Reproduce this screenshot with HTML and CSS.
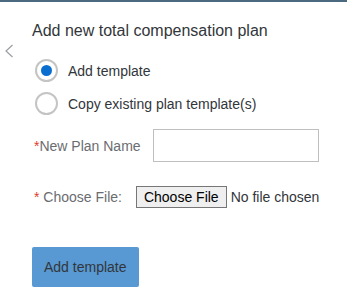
FILE: index.html
```html
<!DOCTYPE html>
<html lang="en">
<head>
    <meta charset="UTF-8">
    <title>Add new total compensation plan</title>
    <link rel="stylesheet" href="styles.css">
</head>
<body>

<div class="page">
    <div class="back">
        <svg class="back-icon" width="10" height="14" viewBox="0 0 10 14">
            <polyline points="8.5,1 2,7 8.5,13" fill="none" stroke="#9a9fa4" stroke-width="1.2"/>
        </svg>
    </div>

    <div class="content">
        <h1 class="title">Add new total compensation plan</h1>

        <label class="radio-row">
            <input type="radio" name="mode" class="radio" checked>
            <span class="radio-text">Add template</span>
        </label>
        <label class="radio-row">
            <input type="radio" name="mode" class="radio">
            <span class="radio-text">Copy existing plan template(s)</span>
        </label>

        <div class="field field-name">
            <span class="field-label"><span class="req">*</span>New Plan Name</span>
            <input type="text" class="text-input">
        </div>

        <div class="field field-file">
            <span class="field-label field-label-file"><span class="req">*</span> Choose File:</span>
            <input type="file" class="file-input">
        </div>

        <button type="button" class="submit-btn">Add template</button>
    </div>
</div>

</body>
</html>
```

FILE: styles.css
```css
body{ margin: 0; border-top: 2px solid #4b6a80; font-family: "Liberation Sans", Arial, sans-serif; color: #32363a; background: #fff; overflow: hidden;}
.page{ display: flex;}
.back{ width: 32px; flex: none;}
.back-icon{ display: block; margin: 42px 0 0 4px;}
.content{ flex: 1; min-width: 0;}
.title{ margin: 19px 0 13px; font-size: 16px; line-height: 20px; font-weight: normal; color: #32363a; white-space: nowrap;}

.radio-row{ display: flex; align-items: center; height: 33px; cursor: pointer;}
.radio{ appearance: none; -webkit-appearance: none; width: 23px; height: 23px; margin: 0 0 0 3px; border: 2px solid #c4c4c4; border-radius: 50%; box-sizing: border-box; background: #fff; display: flex; align-items: center; justify-content: center; flex: none;}
.radio:checked::after{ content: ""; width: 11px; height: 11px; border-radius: 50%; background: #0a6ed1;}
.radio-text{ margin-left: 10px; font-size: 14px; color: #32363a; white-space: nowrap;}

.field{ display: flex; align-items: center;}
.field-name{ margin-top: 9px;}
.field-file{ margin-top: 24px;}
.field-label{ flex: none; white-space: nowrap; padding-left: 2px; margin-right: 12px; font-size: 14px; color: #6a6d70;}
.field-label-file{ margin-right: 14px;}
.req{ color: #e03c2c;}
.text-input{ flex: none; width: 166px; height: 33px; box-sizing: border-box; margin: 0; border: 1px solid #bfbfbf; font-size: 14px;}
.file-input{ flex: none; width: 190px; margin: 0; font-family: "Liberation Sans", Arial, sans-serif; font-size: 14px; color: #32363a;}
.file-input::file-selector-button{ font-family: inherit; font-size: 14px; height: 22px; padding: 0 7px; margin-right: 4px; border: 1px solid #767676; border-radius: 0; background: #efefef; color: #000;}

.submit-btn{ display: block; margin-top: 39px; height: 40px; padding: 0 12px; border: none; border-radius: 2px; background: #5899d3; color: #32363a; font-family: inherit; font-size: 14px;}
```
